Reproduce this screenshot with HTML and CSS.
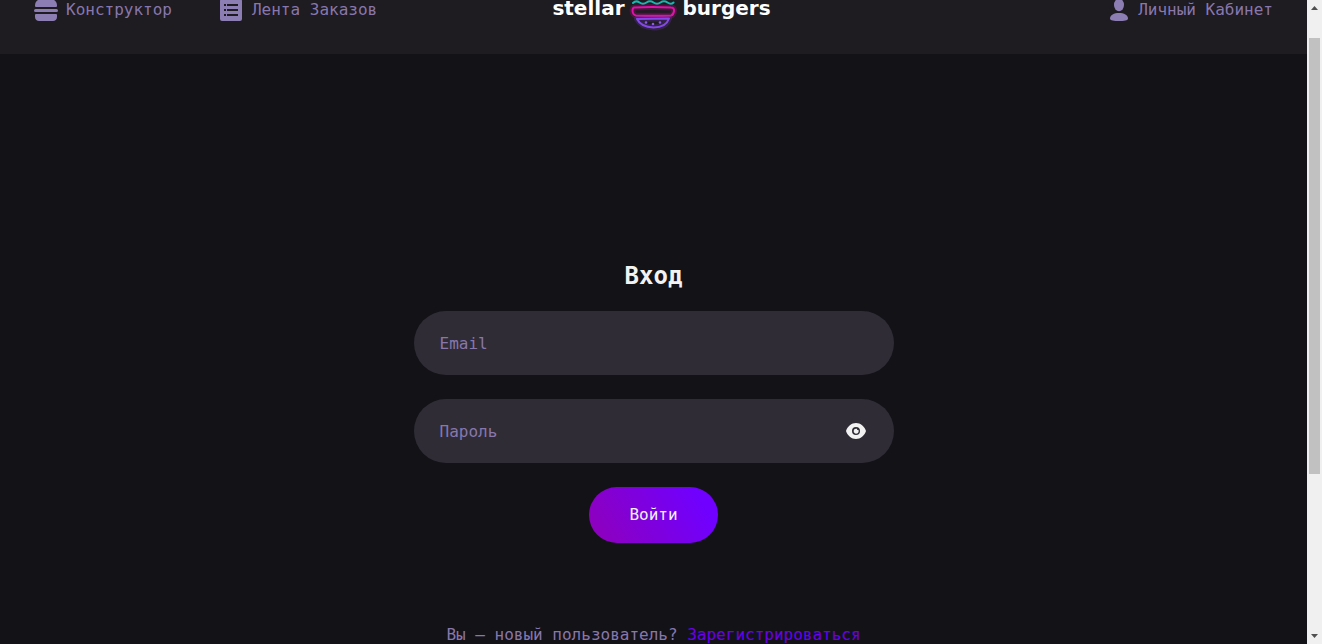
FILE: index.html
```html
<!DOCTYPE html>
<html lang="ru">
<head>
<meta charset="utf-8">
<title>Stellar Burgers</title>
<link rel="stylesheet" href="styles.css">
</head>
<body>
<div class="app">
  <header class="header">
    <nav class="header-inner">
      <div class="menu">
        <a class="menu-link" href="#">
          <svg class="icon" viewBox="0 0 24 24" aria-hidden="true"><path d="M1 7.600C1 3.600 3.600 1 8 1h8c4.400 0 7 2.600 7 6.600v.4a1 1 0 0 1-1 1H2a1 1 0 0 1-1-1z"/><rect x="0" y="11" width="24" height="3" rx="1.500"/><path d="M2 16h20a1 1 0 0 1 1 1v2c0 2.500-2 4-4 4H5c-2 0-4-1.500-4-4v-2a1 1 0 0 1 1-1z"/></svg>
          <span>Конструктор</span>
        </a>
        <a class="menu-link" href="#">
          <svg class="icon" viewBox="0 0 24 24" aria-hidden="true"><path fill-rule="evenodd" d="M2 1h18a2 2 0 0 1 2 2v18a2 2 0 0 1-2 2H2a2 2 0 0 1-2-2V3a2 2 0 0 1 2-2zM4 6v2h2V6zM7 6v2h11V6zM4 11v2h2v-2zM7 11v2h11v-2zM4 16v2h2v-2zM7 16v2h11v-2z"/></svg>
          <span>Лента Заказов</span>
        </a>
      </div>
      <a class="logo" href="#">
        <span class="logo-text logo-left">stellar</span>
        <svg class="logo-mark" viewBox="0 0 50 50" aria-hidden="true">
          <g fill="none" stroke-linecap="round" stroke-linejoin="round">
            <path class="glow-orange" d="M5 12C7 4 15 1 25 1s18 3 20 11z"/>
            <path class="glow-teal" d="M4 18q3-3 6.500-.5t7 0 7 0 7 0 7 0 6 0"/>
            <path class="glow-pink halo" d="M5 22.500q18-1 37 0 3.500 0 3 3.500-.5 4-3 4.500-17 .5-35 0-3-.5-3.500-4.500 0-3 1.500-3.500z"/>
            <path class="glow-pink" d="M5 22.500q18-1 37 0 3.500 0 3 3.500-.5 4-3 4.500-17 .5-35 0-3-.5-3.500-4.500 0-3 1.500-3.500z"/>
            <path class="glow-violet halo" d="M8 34q16-.5 32-.5-3 9-15.500 9Q12 42 8 34z"/>
            <path class="glow-violet" d="M8 34q16-.5 32-.5-3 9-15.500 9Q12 42 8 34z"/>
          </g>
          <g class="dots"><circle cx="17" cy="37.500" r="1.300"/><circle cx="24" cy="39" r="1.300"/><circle cx="31" cy="37.500" r="1.300"/></g>
        </svg>
        <span class="logo-text">burgers</span>
      </a>
      <div class="menu menu-end">
        <a class="menu-link" href="#">
          <svg class="icon" viewBox="0 0 24 24" aria-hidden="true"><ellipse cx="13" cy="7" rx="5" ry="6.200"/><path d="M4 20.500C4 17 8 15 13 15s9 2 9 5.500C22 22.500 18 23 13 23s-9-.5-9-2.500z"/></svg>
          <span>Личный Кабинет</span>
        </a>
      </div>
    </nav>
  </header>
  <main class="content">
    <h1 class="title">Вход</h1>
    <form class="form">
      <input class="field" type="email" placeholder="Email" aria-label="Email">
      <div class="field-wrap">
        <input class="field" type="password" placeholder="Пароль" aria-label="Пароль">
        <button class="toggle" type="button" aria-label="Показать пароль">
          <svg class="icon-eye" viewBox="0 0 24 24" aria-hidden="true"><path fill-rule="evenodd" d="M2 12C3.500 7.500 7.500 4 12 4s8.500 3.500 10 8c-1.500 4.500-5.500 8-10 8S3.500 16.500 2 12zM12 8a4 4 0 1 0 0 8 4 4 0 0 0 0-8z"/><path d="M13 9.800a1.100 1.100 0 0 0 1.400 1.200 2.500 2.500 0 1 1-1.400-1.200z"/></svg>
        </button>
      </div>
      <button class="submit" type="button">Войти</button>
    </form>
    <p class="hint">Вы — новый пользователь? <a class="hint-link" href="#">Зарегистрироваться</a></p>
  </main>
</div>
<aside class="scroll" aria-hidden="true">
  <svg class="arrow" viewBox="0 0 15 17"><path d="M4 10h7L7.500 6z"/></svg>
  <div class="track"><div class="thumb"></div></div>
  <svg class="arrow" viewBox="0 0 15 17"><path d="M4 7h7l-3.500 4z"/></svg>
</aside>
</body>
</html>
```
FILE: styles.css
```css
* {
  box-sizing: border-box;
}

body {
  margin: 0;
  height: 100vh;
  display: flex;
  overflow: hidden;
  background: #131217;
  color: #f2f2f3;
  font: 16px/24px "DejaVu Sans Mono", monospace;
}

a {
  text-decoration: none;
}

.app {
  flex: 1;
  min-width: 0;
}

/* The page is shown scrolled a little way down. */
.header {
  margin-top: -34px;
  padding: 16px 14px;
  background: #1e1b21;
}

.header-inner {
  display: grid;
  grid-template-columns: 1fr auto 1fr;
  align-items: center;
}

.menu {
  display: flex;
  gap: 8px;
}

.menu-end {
  justify-content: flex-end;
}

.menu-link {
  display: flex;
  align-items: center;
  gap: 8px;
  padding: 16px 20px;
  color: #8877ad;
  white-space: nowrap;
}

.icon {
  width: 24px;
  height: 24px;
  fill: #8c7db3;
}

.logo {
  display: grid;
  grid-template-columns: 116px 50px 116px;
  align-items: center;
  gap: 4px;
  color: #fff;
}

.logo-text {
  padding-bottom: 4px;
  font: bold 20px/24px "DejaVu Sans", sans-serif;
}

.logo-left {
  text-align: right;
}

.logo-mark {
  width: 50px;
  height: 50px;
  overflow: visible;
}

.glow-orange {
  stroke: #f80;
}

.glow-teal {
  stroke: #18b8ae;
  stroke-width: 2;
}

.glow-pink {
  stroke: #e010a8;
  stroke-width: 2;
}

.glow-violet {
  stroke: #8548e8;
  stroke-width: 2;
}

.halo {
  stroke-width: 6;
  opacity: 0.2;
}

.dots {
  fill: #8f58e8;
}

.content {
  padding-top: 208px;
}

.title {
  margin: 0 0 20px;
  font-size: 24px;
  line-height: 29px;
  text-align: center;
}

.form {
  display: flex;
  flex-direction: column;
  align-items: center;
  gap: 24px;
  width: 480px;
  max-width: 100%;
  margin: 0 auto;
}

.field-wrap {
  position: relative;
  width: 100%;
}

.field {
  display: block;
  width: 100%;
  height: 64px;
  padding: 0 26px;
  border: 0;
  border-radius: 32px;
  background: #2f2c36;
  color: #f2f2f3;
  font: inherit;
}

.field::placeholder {
  color: #8877ad;
  opacity: 1;
}

.toggle {
  position: absolute;
  top: 20px;
  right: 26px;
  width: 24px;
  height: 24px;
  padding: 0;
  border: 0;
  background: none;
}

.icon-eye {
  display: block;
  fill: #f2f2f3;
}

.submit {
  padding: 16px 40px;
  border: 0;
  border-radius: 28px;
  background: linear-gradient(60deg, #9000b8 0%, #7000ff 85%);
  color: #f2f2f3;
  font: inherit;
}

.hint {
  margin: 80px 0 0;
  color: #8877ad;
  text-align: center;
}

.hint-link {
  color: #6a00f0;
}

.scroll {
  display: flex;
  flex-direction: column;
  width: 15px;
  background: #f0f0f0;
}

.arrow {
  width: 15px;
  height: 17px;
  fill: #505050;
}

.track {
  flex: 1;
  padding: 21px 2px 0;
}

.thumb {
  height: 74%;
  background: #c1c1c1;
}
```
